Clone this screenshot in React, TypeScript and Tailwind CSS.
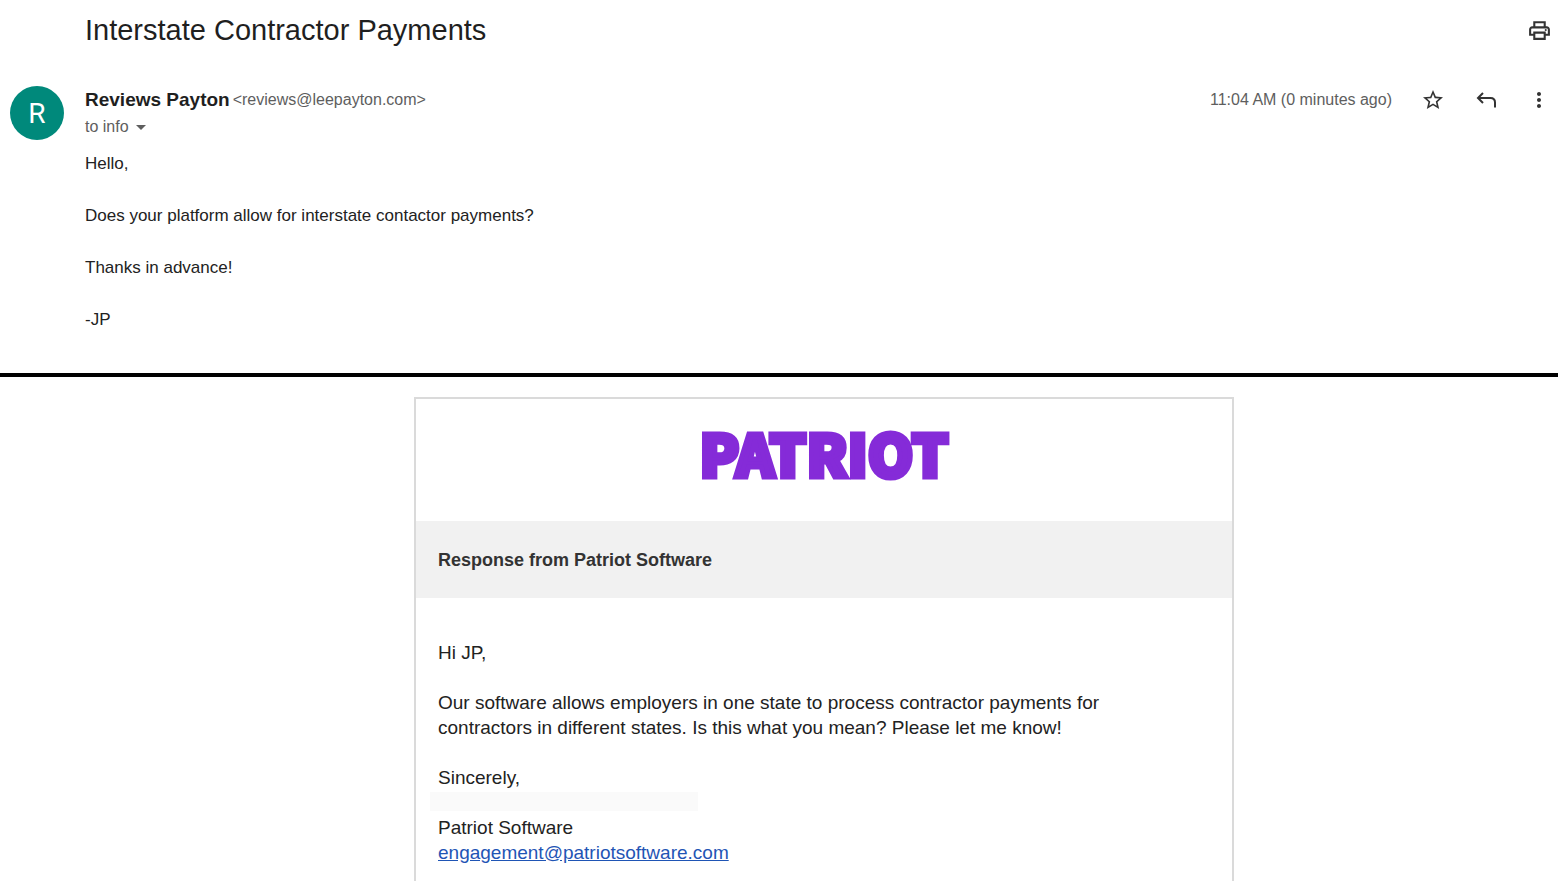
import { MdArrowDropDown, MdMoreVert, MdOutlinePrint, MdStarBorder } from 'react-icons/md';

const messageLines = [
    'Hello,',
    'Does your platform allow for interstate contactor payments?',
    'Thanks in advance!',
    '-JP',
];

const ReplyIcon = () => (
    <svg viewBox="0 0 24 24" className="h-6 w-6" fill="none" stroke="currentColor" strokeWidth="2">
        <path d="M9 5 4 10l5 5" />
        <path d="M4 10H16.5q4.5 0 4.5 4.5v5" />
    </svg>
);

const Message = () => {
    return (
        <section>
            <div className="flex h-[60px] items-center justify-between pl-[85px] pr-1.5">
                <h1 className="text-[29px] leading-9 text-[#1f1f1f]">Interstate Contractor Payments</h1>
                <button aria-label="Print" className="text-[#333333]">
                    <MdOutlinePrint className="h-[25px] w-[25px]" />
                </button>
            </div>

            <div className="flex items-start pl-2.5 pr-[7px] pt-[26px]">
                <div className="flex h-[54px] w-[54px] shrink-0 items-center justify-center rounded-full bg-[#00897b] pt-0.5 font-[Roboto] text-[28px] text-white">
                    R
                </div>
                <div className="ml-[21px] min-w-0 flex-1">
                    <div className="flex h-7 items-center justify-between">
                        <div className="flex items-center gap-[3px]">
                            <span className="text-[19px] font-bold text-[#1f1f1f]">Reviews Payton</span>
                            <span className="text-base text-[#5e5e5e]">&lt;reviews@leepayton.com&gt;</span>
                        </div>
                        <div className="flex items-center gap-[29px] text-[#333333]">
                            <span className="text-base text-[#5e5e5e]">11:04 AM (0 minutes ago)</span>
                            <button aria-label="Star"><MdStarBorder className="h-6 w-6" /></button>
                            <button aria-label="Reply"><ReplyIcon /></button>
                            <button aria-label="More"><MdMoreVert className="h-6 w-6" /></button>
                        </div>
                    </div>
                    <button className="flex h-[26px] items-center text-base text-[#5e5e5e]">
                        to info
                        <MdArrowDropDown className="h-6 w-6" />
                    </button>
                    <div className="flex flex-col gap-[26px] pt-[11px] text-[17px] leading-[26px] text-[#222222]">
                        {messageLines.map((line) => (
                            <p key={line}>{line}</p>
                        ))}
                    </div>
                </div>
            </div>
        </section>
    );
};

const Response = () => {
    return (
        <section className="flex flex-1 flex-col pl-[90px] pt-5">
            <article className="mx-auto flex w-full max-w-[820px] flex-1 flex-col border-2 border-b-0 border-[#dadada]">
                <div className="flex h-[122px] items-center justify-center pb-4">
                    <span className="font-['Noto_Sans_CJK_JP',sans-serif] text-[58px] font-black leading-none text-[#852bd8] [-webkit-text-stroke:5px_#852bd8]">
                        PATRIOT
                    </span>
                </div>
                <h2 className="bg-[#f1f1f1] px-[22px] pb-[25px] pt-[27px] text-lg leading-[25px] font-bold text-[#333333]">
                    Response from Patriot Software
                </h2>
                <div className="flex flex-col gap-[25px] px-[22px] pb-4 pt-[42px] text-[19px] leading-[25px] text-[#222222]">
                    <p>Hi JP,</p>
                    <p>
                        Our software allows employers in one state to process contractor payments for
                        <br />
                        contractors in different states. Is this what you mean? Please let me know!
                    </p>
                    <div>
                        <p>Sincerely,</p>
                        <div className="-ml-2 mb-1 mt-0.5 h-[19px] w-[268px] bg-[#fafafa]"></div>
                        <p>Patriot Software</p>
                        <a href="mailto:engagement@patriotsoftware.com" className="text-[#1f55b5] underline">
                            engagement@patriotsoftware.com
                        </a>
                    </div>
                </div>
            </article>
        </section>
    );
};

const App = () => {
    return (
        <main className="flex min-h-screen flex-col bg-white font-['Liberation_Sans',Arial,sans-serif]">
            <Message />
            <hr className="mt-10 border-t-4 border-black" />
            <Response />
        </main>
    );
};

export default App;
